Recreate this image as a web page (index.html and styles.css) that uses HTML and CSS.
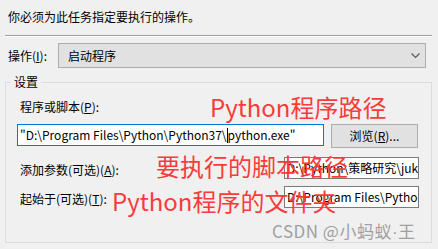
FILE: index.html
```html
<!DOCTYPE html>
<html lang="zh-CN">

<head>
    <meta charset="UTF-8">
    <meta name="viewport" content="width=device-width, initial-scale=1.0">
    <title>操作</title>
    <link rel="stylesheet" href="styles.css">
</head>

<body>
    <div class="page">
        <p class="desc">你必须为此任务指定要执行的操作。</p>
        <div class="sep"></div>

        <div class="op-row">
            <span class="op-label">操作(<u>I</u>):</span>
            <div class="select">
                <span>启动程序</span>
                <svg class="chev" width="9" height="6" viewBox="0 0 9 6">
                    <polyline points="0.5,0.5 4.5,4.5 8.5,0.5" fill="none" stroke="#5a5a5a" stroke-width="1.2" />
                </svg>
            </div>
        </div>

        <fieldset class="group">
            <legend>设置</legend>

            <div class="field-label">程序或脚本(<u>P</u>):</div>
            <div class="prog-row">
                <div class="input focus">"D:\Program Files\Python\Python37\<span class="caret"></span>python.exe"</div>
                <div class="btn">浏览(<u>R</u>)...</div>
            </div>

            <div class="line-row">
                <span class="row-label">添加参数(可选)(<u>A</u>):</span>
                <div class="input small">D:\Python\策略研究\jukuan</div>
            </div>

            <div class="line-row third">
                <span class="row-label">起始于(可选)(<u>T</u>):</span>
                <div class="input small">D:\Program Files\Python</div>
            </div>
        </fieldset>

        <!-- 标注文字 -->
        <div class="note note-1">Python程序路径</div>
        <div class="note note-2">要执行的脚本路径</div>
        <div class="note note-3">Python程序的文件夹</div>

        <div class="mark">CSDN @小蚂蚁<span class="dot">·</span>王</div>
    </div>
</body>

</html>
```

FILE: styles.css
```css
* {
    padding: 0;
    margin: 0;
    box-sizing: border-box;
}

body {
    background-color: #f0f0f0;
    font: 12px "Noto Sans CJK SC", "Microsoft YaHei", sans-serif;
    color: #000;
    overflow: hidden;
}

.page {
    position: relative;
    width: 438px;
    height: 249px;
    overflow: hidden;
}

.desc {
    padding: 9px 0 0 8px;
    line-height: 16px;
}

.sep {
    margin: 10px 6px 0 5px;
    border-top: 1px solid #a0a0a0;
    border-bottom: 1px solid #fff;
}

.op-row {
    display: flex;
    align-items: center;
    margin-top: 6px;
    padding-left: 8px;
}

.op-label {
    width: 50px;
}

.select {
    display: flex;
    align-items: center;
    justify-content: space-between;
    width: 368px;
    height: 25px;
    padding: 0 5px 0 9px;
    background-color: #e1e1e1;
    border: 1px solid #adadad;
}

.chev {
    display: block;
}

.group {
    margin: 7px 6px 0 5px;
    height: 168px;
    border: 1px solid #dcdcdc;
    padding: 10px 11px 0 11px;
}

.group legend {
    margin-left: -6px;
    padding: 0 3px;
    line-height: 14px;
}

.field-label {
    padding-left: 3px;
    line-height: 16px;
}

.prog-row {
    display: flex;
    align-items: center;
    margin-top: 7px;
}

.input {
    height: 22px;
    line-height: 20px;
    padding-left: 2px;
    background-color: #fff;
    border: 1px solid #7a7a7a;
    white-space: nowrap;
    overflow: hidden;
}

.input.focus {
    width: 307px;
    border-color: #0078d7;
}

.caret {
    display: inline-block;
    width: 1px;
    height: 15px;
    background-color: #000;
    vertical-align: -3px;
}

.btn {
    width: 87px;
    height: 24px;
    margin-left: 7px;
    margin-top: 2px;
    line-height: 22px;
    text-align: center;
    background-color: #e1e1e1;
    border: 1px solid #adadad;
}

.line-row {
    display: flex;
    align-items: center;
    justify-content: space-between;
    margin-top: 9px;
    padding-left: 3px;
}

.line-row.third {
    margin-top: 7px;
}

.row-label {
    padding-top: 3px;
}

.input.small {
    width: 135px;
    margin-right: 1px;
}

.note {
    position: absolute;
    font: 24px "Noto Sans CJK SC", "Microsoft YaHei", sans-serif;
    line-height: 28px;
    color: #fb3b3b;
    white-space: nowrap;
}

.note-1 {
    left: 210px;
    top: 93px;
}

.note-2 {
    left: 156px;
    top: 152px;
}

.note-3 {
    left: 112px;
    top: 187px;
}

.mark {
    position: absolute;
    left: 272px;
    top: 220px;
    font: 17px "Noto Sans CJK SC", sans-serif;
    line-height: 22px;
    color: #a0a0a0;
    white-space: nowrap;
    letter-spacing: 0.5px;
}

.mark .dot {
    font-family: "Liberation Sans", sans-serif;
}
```
